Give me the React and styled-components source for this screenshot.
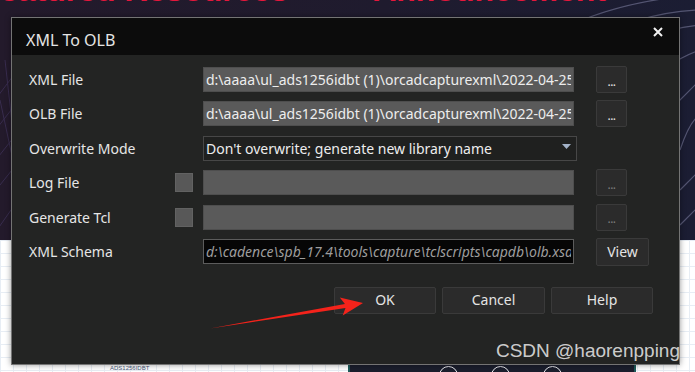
import React from "react";
import styled, { createGlobalStyle } from "styled-components";

const GlobalStyle = createGlobalStyle`
  html, body { margin: 0; padding: 0; }
  body {
    width: 695px;
    height: 372px;
    overflow: hidden;
    font-family: "Noto Sans", "Open Sans", sans-serif;
    background: #ffffff;
  }
  * { box-sizing: border-box; }
`;

const Stage = styled.div`
  position: relative;
  width: 695px;
  height: 372px;
  overflow: hidden;
  display: flex;
  flex-direction: column;
`;

const Hero = styled.section`
  position: relative;
  height: 240px;
  flex: none;
  background: linear-gradient(90deg, #231a2b 0%, #1f1b2e 55%, #1b1d33 100%);
  overflow: hidden;
`;

const HeroArt = styled.svg`
  position: absolute;
  inset: 0;
`;

const Headlines = styled.div`
  position: relative;
  display: flex;
  gap: 85px;
  margin: -26px 0 0 -19.5px;
  font-family: "Liberation Sans", Arial, sans-serif;
  font-weight: 700;
  font-size: 32px;
  line-height: 32px;
  color: #e5173c;
  white-space: nowrap;
`;

const Lower = styled.section`
  flex: 1;
  display: flex;
  align-items: flex-end;
  background-color: #ffffff;
  background-image: linear-gradient(#e7edf4 1px, transparent 1px),
    linear-gradient(90deg, #e7edf4 1px, transparent 1px);
  background-size: 13px 13px;
`;

const Caption = styled.span`
  margin-left: 110px;
  margin-bottom: 1px;
  width: 238px;
  font-family: "Liberation Sans", Arial, sans-serif;
  font-size: 6px;
  color: #4a5a7a;
`;

const DarkCard = styled.div`
  width: 288px;
  height: 120px;
  background: #1b1e2d;
  border-left: 2px solid #1e5a5a;
  border-right: 2px solid #1e5a5a;
  display: flex;
  align-items: flex-end;
  justify-content: center;
  gap: 33px;
  padding-left: 16px;
`;

const Ring = styled.span`
  width: 19px;
  height: 19px;
  border-radius: 50%;
  border: 1.5px solid #e8e8ee;
  margin-bottom: -13px;
`;

const Dialog = styled.div`
  position: absolute;
  left: 11px;
  top: 17px;
  width: 669px;
  height: 348px;
  border: 1px solid #747474;
  background: #232423;
  display: flex;
  flex-direction: column;
  box-shadow: 0 0 6px rgba(0, 0, 0, 0.4);
`;

const TitleBar = styled.div`
  height: 37px;
  flex: none;
  background: #0c0c0c;
  display: flex;
  align-items: flex-start;
  justify-content: space-between;
  padding: 11px 16px 0 14px;
`;

const Title = styled.span`
  font-size: 16px;
  line-height: 22px;
  color: #e4e4e4;
`;

const Close = styled.svg`
  margin-top: -2px;
`;

const Body = styled.div`
  flex: 1;
  display: flex;
  flex-direction: column;
  gap: 7.4px;
  padding: 11px 0 0 17px;
`;

const Row = styled.div`
  display: grid;
  grid-template-columns: 146px 28px 393px auto;
  align-items: center;
  height: 27px;
`;

const Label = styled.span`
  grid-column: 1;
  font-size: 14px;
  color: #e6e6e6;
  white-space: nowrap;
`;

const Check = styled.span`
  grid-column: 2;
  width: 18px;
  height: 19px;
  background: #585858;
  border: 1px solid #626262;
`;

const Field = styled.input`
  grid-column: 3;
  width: 371px;
  height: 25px;
  margin: 0;
  padding: 0 2px;
  border: 1px solid ${(p) => (p.$dark ? "#5c5c5c" : "#4e4e4e")};
  background: ${(p) => (p.$dark ? "#060606" : "#5a5a5a")};
  color: ${(p) => (p.$dark ? "#9d9d9d" : "#ededed")};
  font-family: "Noto Sans", "Open Sans", sans-serif;
  font-size: 14px;
  font-style: ${(p) => (p.$dark ? "italic" : "normal")};
  outline: none;
`;

const Select = styled.div`
  grid-column: 3;
  width: 374px;
  height: 25px;
  border: 1px solid #474747;
  background: #1f201f;
  display: flex;
  align-items: center;
  justify-content: space-between;
  padding: 0 5px 0 2px;
  font-size: 14px;
  color: #ededed;
  white-space: nowrap;
`;

const Caret = styled.svg`
  margin-top: -3px;
`;

const Button = styled.button`
  height: ${(p) => (p.$tall ? "28px" : "27px")};
  width: ${(p) => p.$w}px;
  margin: 0;
  padding: 0;
  background: #2b2b2b;
  border: 1px solid #3a3a3a;
  border-radius: 2px;
  color: ${(p) => (p.disabled ? "#7c7c7c" : "#e4e4e4")};
  font-family: "Noto Sans", "Open Sans", sans-serif;
  font-size: 14px;
  line-height: 1;
  display: flex;
  align-items: center;
  justify-content: center;
`;

const Dots = styled.span`
  font-size: 12px;
  margin-top: 4px;
  letter-spacing: -0.5px;
`;

const Side = styled.div`
  grid-column: 4;
`;

const Footer = styled.div`
  display: flex;
  justify-content: flex-end;
  gap: 6px;
  padding-right: 26px;
  margin-top: 14.6px;
`;

const Watermark = styled.span`
  position: absolute;
  right: 15px;
  top: 341px;
  font-family: "Liberation Sans", Arial, sans-serif;
  font-size: 19px;
  line-height: 19px;
  color: rgba(226, 226, 226, 0.9);
  white-space: nowrap;
`;

const Annotation = styled.svg`
  position: absolute;
  left: 0;
  top: 0;
  pointer-events: none;
`;

const fileRows = [
  { label: "XML File", value: "d:\\aaaa\\ul_ads1256idbt (1)\\orcadcapturexml\\2022-04-25" },
  { label: "OLB File", value: "d:\\aaaa\\ul_ads1256idbt (1)\\orcadcapturexml\\2022-04-25" },
];

const optRows = [{ label: "Log File" }, { label: "Generate Tcl" }];

export default function App() {
  return (
    <>
      <GlobalStyle />
      <Stage>
        <Hero>
          <HeroArt width="695" height="240" viewBox="0 0 695 240">
            <g stroke="#3b2f52" strokeWidth="1" fill="none" opacity="0.9">
              <path d="M-20 120 L40 40" />
              <path d="M-20 150 L50 60" />
              <path d="M-20 180 L55 85" />
              <path d="M-20 210 L60 110" />
              <path d="M-10 240 L60 140" />
              <path d="M0 100 L30 240" />
              <path d="M5 60 L25 240" />
            </g>
            <g stroke="#6d6e8e" strokeWidth="1.2" fill="none" opacity="0.7">
              <path d="M560 30 Q620 0 700 -5" />
              <path d="M580 45 Q640 12 700 10" />
              <path d="M600 60 Q650 30 700 25" />
              <path d="M640 90 Q670 60 700 50" />
              <path d="M670 110 Q690 90 700 80" />
              <path d="M680 150 Q690 120 700 115" />
              <path d="M680 190 L700 170" />
              <path d="M680 225 L700 205" />
            </g>
          </HeroArt>
          <Headlines>
            <span>Featured Resources</span>
            <span>Announcement</span>
          </Headlines>
        </Hero>
        <Lower>
          <Caption>ADS1256IDBT</Caption>
          <DarkCard>
            <Ring />
            <Ring />
            <Ring />
          </DarkCard>
        </Lower>

        <Dialog>
          <TitleBar>
            <Title>XML To OLB</Title>
            <Close width="10" height="10" viewBox="0 0 10 10">
              <path d="M1 1 L9 9 M9 1 L1 9" stroke="#f2f2f2" strokeWidth="2" />
            </Close>
          </TitleBar>
          <Body>
            {fileRows.map((r) => (
              <Row key={r.label}>
                <Label>{r.label}</Label>
                <Field readOnly value={r.value} />
                <Side>
                  <Button $w={31}>
                    <Dots>...</Dots>
                  </Button>
                </Side>
              </Row>
            ))}
            <Row>
              <Label>Overwrite Mode</Label>
              <Select>
                <span>Don't overwrite; generate new library name</span>
                <Caret width="9" height="5" viewBox="0 0 9 5">
                  <path d="M0 0 L9 0 L4.5 5 Z" fill="#a3b2c8" />
                </Caret>
              </Select>
            </Row>
            {optRows.map((r) => (
              <Row key={r.label}>
                <Label>{r.label}</Label>
                <Check />
                <Field readOnly value="" />
                <Side>
                  <Button $w={31} disabled>
                    <Dots>...</Dots>
                  </Button>
                </Side>
              </Row>
            ))}
            <Row>
              <Label>XML Schema</Label>
              <Field
                $dark
                readOnly
                value="d:\cadence\spb_17.4\tools\capture\tclscripts\capdb\olb.xsd"
              />
              <Side>
                <Button $w={53} $tall>
                  View
                </Button>
              </Side>
            </Row>
            <Footer>
              <Button $w={102}>OK</Button>
              <Button $w={103}>Cancel</Button>
              <Button $w={102}>Help</Button>
            </Footer>
          </Body>
        </Dialog>

        <Watermark>CSDN @haorenpping</Watermark>

        <Annotation width="695" height="372" viewBox="0 0 695 372">
          <polygon
            points="363,303 339.8,297.6 344.9,303.9 210,328.5 345.5,307.9 342.7,315.4"
            fill="#f4231b"
          />
        </Annotation>
      </Stage>
    </>
  );
}
